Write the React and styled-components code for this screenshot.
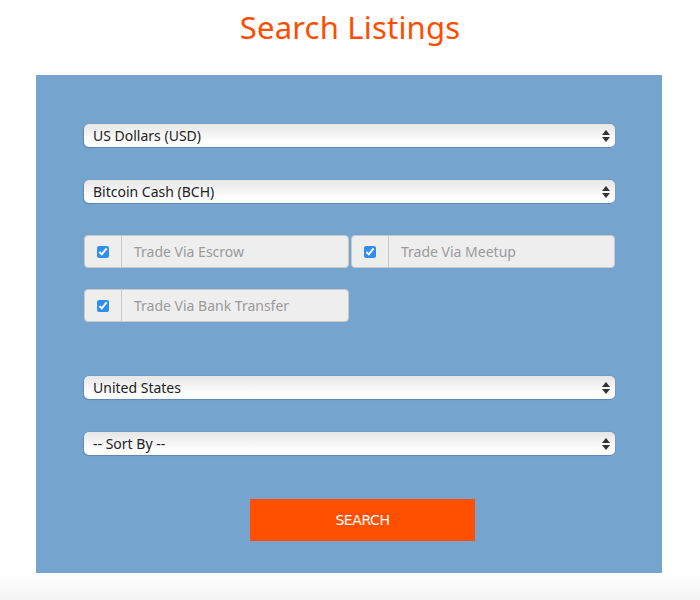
import React from "react";
import styled, { createGlobalStyle } from "styled-components";

const GlobalStyle = createGlobalStyle`
  body {
    margin: 0;
    background: #fff;
    font-family: "Noto Sans", "Liberation Sans", sans-serif;
  }
`;

const Page = styled.div`
  width: 700px;
  display: flex;
  flex-direction: column;
`;

const Title = styled.h1`
  margin: 6px 0 0;
  height: 69px;
  text-align: center;
  font-size: 31px;
  font-weight: 400;
  color: #ff4d00;
  letter-spacing: 0.2px;
`;

const Panel = styled.form`
  width: 626px;
  margin-left: 36px;
  box-sizing: border-box;
  background: #75a5cf;
  padding: 49px 47px 32px 48px;
  display: flex;
  flex-direction: column;
`;

const SelectWrap = styled.div`
  position: relative;
  height: 23px;
  margin-top: ${(p) => p.gap || 0}px;
`;

const Select = styled.select`
  appearance: none;
  -webkit-appearance: none;
  width: 100%;
  height: 23px;
  box-sizing: border-box;
  border: none;
  border-radius: 5px;
  padding: 0 24px 0 9px;
  font-family: inherit;
  font-size: 14px;
  color: #222;
  background: linear-gradient(#e6e6e6, #f4f4f4 45%, #ffffff 80%, #fafafa);
  box-shadow: -1px 1px 1px rgba(0, 0, 0, 0.15), 0 0 0 1px rgba(0, 0, 0, 0.03);
  outline: none;
`;

const Arrows = styled.svg`
  position: absolute;
  right: 5px;
  top: 6px;
  pointer-events: none;
`;

const Checks = styled.div`
  display: grid;
  grid-template-columns: 265px 264px;
  column-gap: 2px;
  row-gap: 21px;
  margin-top: 32px;
`;

const Group = styled.label`
  display: flex;
  height: 33px;
  box-sizing: border-box;
  border: 1px solid #c9c9c9;
  border-radius: 4px;
  background: #eeeeee;
`;

const Addon = styled.span`
  width: 36px;
  flex: none;
  display: flex;
  align-items: center;
  justify-content: center;
  border-right: 1px solid #c9c9c9;
`;

const Box = styled.input`
  margin: 0 1px 0 0;
  width: 12px;
  height: 12px;
  accent-color: #2f8ff0;
`;

const Label = styled.span`
  flex: 1;
  display: flex;
  align-items: center;
  padding-left: 12px;
  font-size: 14px;
  color: #9a9a9a;
`;

const SearchButton = styled.button`
  width: 225px;
  height: 42px;
  margin: 44px 0 0 166px;
  border: none;
  background: #ff4f00;
  color: #fff;
  font-family: "DejaVu Sans", sans-serif;
  font-size: 14px;
  letter-spacing: -0.4px;
`;

const Footer = styled.div`
  width: 100%;
  height: 27px;
  background: linear-gradient(#ffffff, #f3f3f3);
`;

function Dropdown({ gap, value }) {
  return (
    <SelectWrap gap={gap}>
      <Select defaultValue={value}>
        <option>{value}</option>
      </Select>
      <Arrows width="8" height="12" viewBox="0 0 8 12">
        <path d="M4 0 L8 5 L0 5 Z" fill="#333" />
        <path d="M4 12 L8 7 L0 7 Z" fill="#333" />
      </Arrows>
    </SelectWrap>
  );
}

const options = ["Trade Via Escrow", "Trade Via Meetup", "Trade Via Bank Transfer"];

export default function App() {
  return (
    <>
      <GlobalStyle />
      <Page>
        <Title>Search Listings</Title>
        <Panel onSubmit={(e) => e.preventDefault()}>
          <Dropdown value="US Dollars (USD)" />
          <Dropdown gap={33} value="Bitcoin Cash (BCH)" />
          <Checks>
            {options.map((o) => (
              <Group key={o}>
                <Addon>
                  <Box type="checkbox" defaultChecked />
                </Addon>
                <Label>{o}</Label>
              </Group>
            ))}
          </Checks>
          <Dropdown gap={54} value="United States" />
          <Dropdown gap={33} value="-- Sort By --" />
          <SearchButton type="submit">SEARCH</SearchButton>
        </Panel>
        <Footer />
      </Page>
    </>
  );
}
